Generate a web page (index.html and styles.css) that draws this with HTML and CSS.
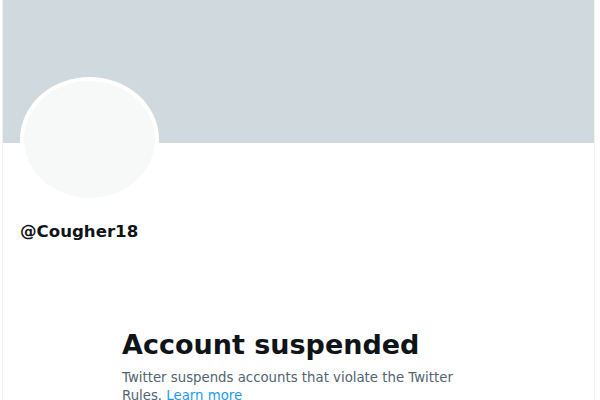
FILE: index.html
```html
<!DOCTYPE html>
<html lang="en">
<head>
    <meta charset="UTF-8">
    <meta name="viewport" content="width=device-width, initial-scale=1.0">
    <title>@Cougher18 / Twitter</title>
    <link rel="stylesheet" href="styles.css">
</head>
<body>
    <div class="page">
        <div class="banner"></div>
        <div class="profile">
            <div class="avatar"></div>
            <div class="username">@Cougher18</div>
            <div class="empty-state">
                <h1>Account suspended</h1>
                <p>Twitter suspends accounts that violate the Twitter Rules. <a href="#">Learn more</a></p>
            </div>
        </div>
    </div>
</body>
</html>
```

FILE: styles.css
```css
body {
    margin: 0;
    background: #fff;
    font-family: "DejaVu Sans", "Liberation Sans", sans-serif;
    color: #0f1419;
    overflow: hidden;
}
.page {
    margin-left: 2px;
    width: 591px;
    min-height: 400px;
    border-left: 1px solid #eff3f4;
    border-right: 1px solid #eff3f4;
}
.banner {
    height: 143px;
    background-color: #cfd9de;
}
.profile {
    padding: 0 17px;
}
.avatar {
    box-sizing: border-box;
    width: 139px;
    height: 125px;
    margin-top: -66px;
    border-radius: 50%;
    border: 4px solid #fff;
    background-color: #f7f9f9;
}
.username {
    margin-top: 20px;
    font-size: 16.6px;
    line-height: 20px;
    font-weight: bold;
}
.empty-state {
    max-width: 340px;
    margin: 87px 0 0 102px;
}
.empty-state h1 {
    margin: 0;
    font-size: 27px;
    line-height: 32px;
    font-weight: bold;
}
.empty-state p {
    margin: 8px 0 0;
    font-size: 13.3px;
    line-height: 18px;
    color: #536471;
}
.empty-state a {
    color: #1d9bf0;
    text-decoration: none;
}
```
